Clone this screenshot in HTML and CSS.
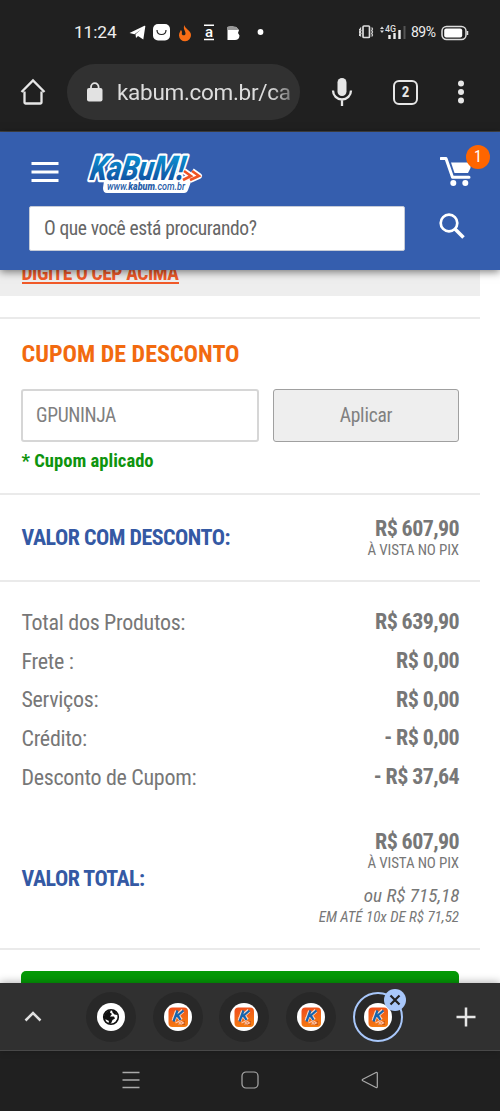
FILE: index.html
```
<!DOCTYPE html>
<html lang="pt-BR">
<head>
<meta charset="utf-8">
<title>KaBuM!</title>
<link rel="stylesheet" href="styles.css">
</head>
<body>
<svg class="defs" width="0" height="0" aria-hidden="true">
  <defs>
    <linearGradient id="fav" x1="0" y1="0" x2="0.3" y2="1"><stop offset="0" stop-color="#f04b1c"/><stop offset="1" stop-color="#f47a12"/></linearGradient>
    <linearGradient id="logo" x1="0" y1="0" x2="0" y2="1"><stop offset="0.2" stop-color="#0a90d0"/><stop offset="0.9" stop-color="#124a9c"/></linearGradient>
    <symbol id="tab" viewBox="0 0 28 28">
      <circle cx="14" cy="14" r="14" fill="#fff"/>
      <rect x="4.500" y="4.500" width="19.500" height="19.500" rx="4" fill="url(#fav)"/>
      <path d="m15 20 6-2v4h-7z" fill="#a53412" opacity=".5"/>
      <path d="M13 8 9.500 18M19 7.500l-6 5.500 1 0 3 4" fill="none" stroke="#ffd9c4" stroke-width="4"/>
      <path d="M13.500 7.500 9.500 18.500M19.500 7.500l-7 6 1.500-.5 2.500 4" fill="none" stroke="#1764ae" stroke-width="2.300"/>
      <path d="m11.500 20 3-1.500 2 1.500-2 1.500M16.500 18l3 2-3 1.500" fill="none" stroke="#ffc4a6" stroke-width="1.200"/>
    </symbol>
  </defs>
</svg>

<header class="chrome">
  <div class="status">
    <span class="clock">11:24</span>
    <svg class="apps" width="140" height="20" viewBox="0 0 140 20">
      <path fill="#fff" d="M.500 11 15.500 3.800c.6-.3 1 .1.800.7l-2 13-5.300-3.600-2 2.200-.5-3.800L12 7.500l-6.500 4.700z"/>
      <rect x="24" y="2" width="17" height="16.500" rx="5" fill="#fff"/>
      <path d="M28 8c0 6 9 6 9 0" fill="none" stroke="#222" stroke-width="1.200"/>
      <path fill="#f96d15" d="M55.500 3c0 4 6.500 5 6.500 10a6 6 0 0 1-12 .500c0-3 1.500-4 1.800-5.500 1.500.8 1.200 2.500 1 3.500-.4 2 3.400 2.700 3.700.3C56.800 9 53.500 7 55.500 3z"/>
      <path d="M75 3.200h10M75 17.500h10" stroke="#fff" stroke-width="1.500"/>
      <text class="app-a" x="80" y="14.500">a</text>
      <path fill="#fff" d="M98.500 5h8.500l3 3-1 3 1.500 2.500c0 3-2 4.500-4.500 4.500h-7.500z"/>
      <path fill="#999" d="M98.500 5c1-1.500 7-1.500 9.500.500l1 2.500H98.500z"/>
      <circle cx="131.500" cy="10" r="2.900" fill="#fff"/>
    </svg>
    <svg class="signals" width="48" height="18" viewBox="0 0 48 18">
      <rect x="4" y="3" width="6.500" height="11.500" rx="1" fill="none" stroke="#ddd" stroke-width="1.700"/>
      <path d="M.200 6v7M2 4.500l-.8 1.500.8 1.500-.8 1.500.8 1.500-.8 1.500.8 1.500M12.700 4.500l.8 1.500-.8 1.500.8 1.500-.8 1.500.8 1.500-.8 1.500" fill="none" stroke="#ddd" stroke-width="1.200"/>
      <path d="m21 6 2-2.500L25 6zM21 7.500l2 2.500 2-2.500z" fill="#ddd"/>
      <text class="net" x="26" y="9.300" textLength="11" lengthAdjust="spacingAndGlyphs">4G</text>
      <path d="M30.500 12v4M35.500 10v6M40.500 7v9" stroke="#eee" stroke-width="2.400"/>
      <path d="M45.500 3v13" stroke="#555" stroke-width="2"/>
    </svg>
    <span class="percent">89%</span>
    <svg class="battery" width="28" height="16" viewBox="0 0 28 16">
      <rect x="1" y="1.500" width="24" height="13" rx="4.500" fill="none" stroke="#ddd" stroke-width="1.500"/>
      <rect x="3.200" y="3.500" width="18" height="9" rx="2" fill="#fff"/>
      <path d="M26.500 6v4" stroke="#ddd" stroke-width="1.500"/>
    </svg>
  </div>
  <div class="toolbar">
    <svg class="home" width="26" height="28" viewBox="0 0 26 28"><path d="M4.500 13.500V24.500a1 1 0 0 0 1 1h15a1 1 0 0 0 1-1V13.500M1.500 14 13 2.500 24.500 14" fill="none" stroke="#e6e6e6" stroke-width="2.300"/></svg>
    <div class="omnibox">
      <svg width="16" height="20" viewBox="0 0 16 20"><rect x="0" y="6" width="15.500" height="13.500" rx="2" fill="#e2e2e2"/><path d="M4 8V5a3.800 3.800 0 0 1 7.600 0v3" fill="none" stroke="#e2e2e2" stroke-width="1.800"/></svg>
      <span class="url">kabum.com.br/ca</span>
    </div>
    <svg class="mic" width="22" height="30" viewBox="0 0 22 30"><rect x="6.500" y="1" width="9" height="18" rx="4.500" fill="#e6e6e6"/><path d="M2 13.500a9 9 0 0 0 18 0M11 22.500v6.500" fill="none" stroke="#e6e6e6" stroke-width="2.300"/></svg>
    <span class="tabs">2</span>
    <svg class="dots" width="6" height="24" viewBox="0 0 6 24"><g fill="#e6e6e6"><circle cx="3" cy="3.500" r="3"/><circle cx="3" cy="12" r="3"/><circle cx="3" cy="20.500" r="3"/></g></svg>
  </div>
</header>

<div class="site">
  <div class="brand-row">
    <svg class="menu" width="28" height="22" viewBox="0 0 28 22"><path d="M.500 2.500h27M.500 11h27M.500 19.500h27" stroke="#fff" stroke-width="2.800"/></svg>
    <svg class="logo" width="118" height="42" viewBox="0 0 118 42">
      <path d="m18 27 88-2-4 11q-1 3-4 3H21q-4 0-4-5z" fill="#fff"/>
      <g transform="translate(3 26) skewX(-9)"><text class="kabum" x="0" y="0" textLength="94" lengthAdjust="spacingAndGlyphs">KaBuM!</text></g>
      <path d="m98 17 7 5-8 4M106 17l7 5-9 4" fill="none" stroke="#fff" stroke-width="6" stroke-linejoin="round"/>
      <path d="m98 17 7 5-8 4M106 17l7 5-9 4" fill="none" stroke="#ef5423" stroke-width="2.600"/>
      <text class="www" x="21" y="35.500" textLength="78" lengthAdjust="spacingAndGlyphs">www.<tspan class="heavy">kabum</tspan>.com.br</text>
    </svg>
    <div class="cart">
      <svg width="34" height="32" viewBox="0 0 34 32"><path d="M1 2.500h5l6.500 18.800H29" fill="none" stroke="#fff" stroke-width="3" stroke-linecap="round" stroke-linejoin="round"/><path d="M11 6.500h19.500v5.500l-2.500 5H14.500z" fill="#fff"/><circle cx="13.300" cy="27" r="3" fill="#fff"/><circle cx="25.300" cy="27" r="3" fill="#fff"/></svg>
      <span class="badge">1</span>
    </div>
  </div>
  <div class="search-row">
    <div class="search"><span>O que você está procurando?</span></div>
    <svg width="26" height="26" viewBox="0 0 26 26"><circle cx="10" cy="10" r="8.300" fill="none" stroke="#fff" stroke-width="2.700"/><path d="m16 16 8.500 8.500" stroke="#fff" stroke-width="3.600"/></svg>
  </div>
</div>

<main class="page">
  <div class="cep"><a>DIGITE O CEP ACIMA</a></div>
  <div class="gap"></div>
  <section class="coupon">
    <h2>CUPOM DE DESCONTO</h2>
    <div class="form"><div class="field">GPUNINJA</div><div class="apply">Aplicar</div></div>
    <p class="ok">* Cupom aplicado</p>
  </section>
  <section class="discounted">
    <span class="label">VALOR COM DESCONTO:</span>
    <div class="amounts"><span class="price">R$ 607,90</span><span class="small">À VISTA NO PIX</span></div>
  </section>
  <section class="totals">
    <div class="line"><span>Total dos Produtos:</span><span class="price">R$ 639,90</span></div>
    <div class="line"><span>Frete :</span><span class="price">R$ 0,00</span></div>
    <div class="line"><span>Serviços:</span><span class="price">R$ 0,00</span></div>
    <div class="line"><span>Crédito:</span><span class="price">- R$ 0,00</span></div>
    <div class="line"><span>Desconto de Cupom:</span><span class="price">- R$ 37,64</span></div>
    <div class="grand">
      <span class="label">VALOR TOTAL:</span>
      <div class="amounts"><span class="price">R$ 607,90</span><span class="small">À VISTA NO PIX</span><span class="or">ou R$ 715,18</span><span class="slanted">EM ATÉ 10x DE R$ 71,52</span></div>
    </div>
  </section>
  <div class="buy"></div>
</main>

<nav class="tabstrip">
  <svg class="up" width="18" height="12" viewBox="0 0 18 12"><path d="m1.500 9.500 7.500-7.500 7.500 7.500" fill="none" stroke="#e0e0e0" stroke-width="2.500"/></svg>
  <div class="tab-list">
    <span class="tab"><svg width="28" height="28" viewBox="0 0 28 28"><circle cx="14" cy="14" r="14" fill="#fff"/><circle cx="14" cy="14" r="7.300" fill="none" stroke="#111" stroke-width="1.600"/><path fill="#111" d="M7 13c1-3 3.500-5.500 7-6l-1 2.500 2 1.500-2 2.500h4l1 2-2.500 1.500-1.500 3.500-3 .5 1-3-3-1.500-2 .500zM15 7l3 1 2.500 4-3-.5-2-2z"/></svg></span>
    <span class="tab"><svg width="28" height="28"><use href="#tab"/></svg></span>
    <span class="tab"><svg width="28" height="28"><use href="#tab"/></svg></span>
    <span class="tab"><svg width="28" height="28"><use href="#tab"/></svg></span>
    <span class="tab current"><svg width="28" height="28"><use href="#tab"/></svg><span class="close"><svg width="12" height="12" viewBox="0 0 12 12"><path d="m1.500 1.500 9 9m0-9-9 9" stroke="#222" stroke-width="2.200"/></svg></span></span>
  </div>
  <svg class="plus" width="20" height="20" viewBox="0 0 20 20"><path d="M10 .500v19M.500 10h19" stroke="#e6e6e6" stroke-width="2.500"/></svg>
</nav>
<footer class="system">
  <svg width="18" height="18" viewBox="0 0 18 18"><path d="M.500 1.500h17M.500 9h17M.500 16.500h17" stroke="#aaa" stroke-width="1.300"/></svg>
  <svg width="18" height="18" viewBox="0 0 18 18"><rect x="1" y="1" width="16" height="16" rx="4" fill="none" stroke="#aaa" stroke-width="1.200"/></svg>
  <svg width="18" height="18" viewBox="0 0 18 18"><path d="M1.800 8.300 15 1.500q1.300-.4 1.300.8v13.400q0 1.200-1.300.8L1.800 9.700q-1.200-.7 0-1.400z" fill="none" stroke="#aaa" stroke-width="1.200"/></svg>
</footer>
</body>
</html>
```
FILE: styles.css
```
* { box-sizing: border-box; }
body {
  margin: 0;
  width: 500px;
  height: 1111px;
  display: flex;
  flex-direction: column;
  overflow: hidden;
  background: #fff;
  color: #777;
  font-family: "Roboto Condensed", Roboto, sans-serif;
  font-stretch: 75%;
}
svg { display: block; flex: none; }
.defs { position: absolute; }

.chrome {
  height: 132px;
  flex: none;
  background: #202020;
  border-bottom: 1px solid #444;
  font-family: Roboto, sans-serif;
  font-stretch: normal;
}
.status { display: flex; align-items: center; height: 64px; padding: 0 30px 0 74px; }
.clock { width: 55px; font-size: 17.300px; color: #eee; letter-spacing: -.1px; }
.apps { margin-right: 90px; }
.app-a { font: 500 15px Roboto, sans-serif; fill: #fff; text-anchor: middle; }
.net { font: 500 9px Roboto, sans-serif; fill: #ddd; }
.percent { margin-left: 4px; width: 30px; font-size: 14px; color: #eee; white-space: nowrap; letter-spacing: -.5px; }
.battery { margin-top: 1px; }
.toolbar { display: flex; align-items: center; height: 56px; padding-left: 20px; }
.omnibox {
  display: flex;
  align-items: center;
  width: 233px;
  height: 56px;
  margin-left: 21px;
  padding-left: 20px;
  border-radius: 28px;
  background: #313131;
}
.url {
  width: 174px;
  margin-left: 14px;
  overflow: hidden;
  white-space: nowrap;
  font-size: 22.500px;
  letter-spacing: -.3px;
  line-height: 32px;
  color: #ddd;
  -webkit-mask-image: linear-gradient(90deg, #000 88%, rgba(0, 0, 0, .4));
}
.mic { margin-left: 31px; }
.tabs {
  display: flex;
  align-items: center;
  justify-content: center;
  width: 25px;
  height: 25px;
  margin-left: 40px;
  border: 2.500px solid #e6e6e6;
  border-radius: 6px;
  font-size: 15px;
  font-weight: 700;
  font-stretch: 80%;
  color: #e6e6e6;
}
.dots { margin-left: 40px; }

.site {
  position: relative;
  z-index: 1;
  flex: none;
  height: 138px;
  background: #355eae;
  box-shadow: 0 2px 8px rgba(0, 0, 0, .5);
}
.brand-row { display: flex; height: 74px; padding: 18px 0 0 31px; }
.menu { margin-top: 11px; }
.logo { margin: 4px 0 0 27px; overflow: visible; }
.kabum {
  font: italic 900 34px Roboto, sans-serif;
  fill: url(#logo);
  stroke: #fff;
  stroke-width: 4.500px;
  stroke-linejoin: round;
  paint-order: stroke;
}
.www { font: italic 500 10.500px Roboto, sans-serif; fill: #285da8; }
.heavy { font-weight: 900; }
.cart { position: relative; margin: 6px 0 0 236px; }
.badge {
  position: absolute;
  left: 26px;
  top: -11px;
  width: 24px;
  height: 24px;
  border-radius: 50%;
  background: #ff6500;
  color: #fff;
  font-size: 16px;
  line-height: 24px;
  text-align: center;
}
.search-row { display: flex; align-items: center; padding-left: 29px; }
.search {
  width: 376px;
  height: 45px;
  margin-right: 34px;
  padding-left: 14px;
  border: 1px solid #c5cbd7;
  border-radius: 2px;
  background: #fff;
  color: #666;
  font-size: 19.500px;
  letter-spacing: -.38px;
  line-height: 43px;
}
.search-row svg { margin-top: -6px; }

.page { flex: none; width: 480px; height: 713px; overflow: hidden; }
.cep { display: flex; align-items: center; height: 26px; padding-left: 21.500px; background: #eee; }
.cep a {
  margin-top: -17px;
  font-size: 19.500px;
  font-weight: 700;
  letter-spacing: -.4px;
  color: #f15a29;
  border-bottom: 2px solid #f15a29;
  line-height: 17px;
}
.gap { height: 23px; border-bottom: 2px solid #eaeaea; }
.coupon { height: 176px; padding: 19px 21px 0 21.500px; border-bottom: 2px solid #eaeaea; }
h2 { margin: 0; height: 51px; color: #f26a0f; font-size: 24px; line-height: 32px; }
.form { display: flex; gap: 14px; margin-left: -.5px; }
.field, .apply { height: 53px; border: 2px solid #d6d6d6; border-radius: 3px; font-size: 19.500px; line-height: 50px; color: #808080; }
.field { width: 238px; padding-left: 13px; letter-spacing: -.35px; }
.apply { width: 186px; border: 1px solid #a0a0a0; background: #eee; text-align: center; line-height: 52px; letter-spacing: -.2px; }
.ok { margin: 7px 0 0; color: #0e940e; font-size: 18.600px; font-weight: 700; line-height: 25px; }
.discounted { display: flex; justify-content: space-between; height: 87px; padding: 21px 21px 0 21.500px; border-bottom: 2px solid #eaeaea; }
.label { font-size: 22px; font-weight: 700; letter-spacing: -.5px; line-height: 46px; color: #3459a4; }
.discounted .label { line-height: 44px; }
.amounts { display: flex; flex-direction: column; align-items: flex-end; }
.price { font-size: 22px; font-weight: 700; letter-spacing: -.6px; line-height: 26px; }
.small { font-size: 15px; letter-spacing: -.15px; line-height: 17px; }
.totals { height: 368px; padding: 21px 21px 0 21.500px; border-bottom: 2px solid #eaeaea; }
.line { display: flex; align-items: center; justify-content: space-between; height: 38.700px; font-size: 22px; letter-spacing: -.3px; }
.grand { display: flex; justify-content: space-between; padding-top: 33px; }
.grand .label { margin-top: 27px; }
.or { margin: 13px -.5px 0 0; font-size: 19.200px; font-style: italic; line-height: 22px; }
.slanted { font-size: 15px; font-style: italic; line-height: 20px; }
.buy { width: 438px; height: 30px; margin: 21px 0 0 21px; border-radius: 5px; background: #049906; }

.tabstrip {
  position: relative;
  flex: none;
  display: flex;
  align-items: center;
  height: 68px;
  padding-left: 24px;
  background: #303030;
  border-bottom: 1px solid #484848;
  box-shadow: 0 -1px 8px rgba(0, 0, 0, .3);
}
.tab-list { display: flex; gap: 16.700px; margin-left: 44px; }
.tab {
  position: relative;
  display: flex;
  align-items: center;
  justify-content: center;
  width: 50px;
  height: 50px;
  border-radius: 50%;
  background: #282828;
}
.current { border: 2.500px solid #a8c7fa; }
.close {
  position: absolute;
  left: 29px;
  top: -5px;
  display: flex;
  align-items: center;
  justify-content: center;
  width: 22px;
  height: 22px;
  border-radius: 50%;
  background: #a8c7fa;
}
.plus { margin-left: 53px; }
.system {
  flex: 1;
  display: flex;
  justify-content: center;
  gap: 101.500px;
  padding-top: 20px;
  background: #202020;
}
```
